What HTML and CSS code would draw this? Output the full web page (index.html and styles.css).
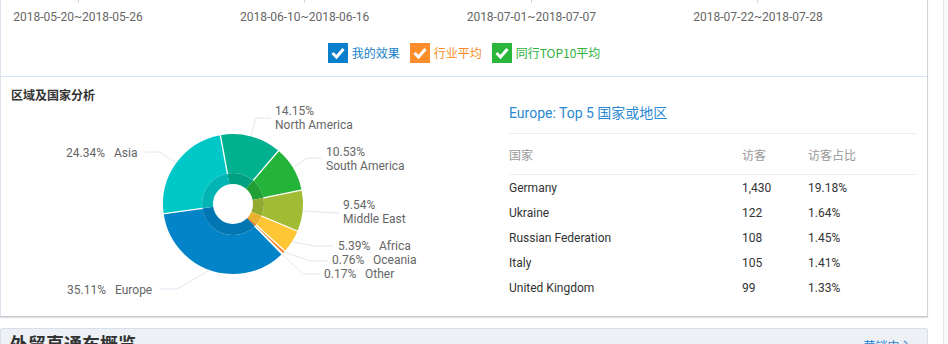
FILE: index.html
```html
<!DOCTYPE html>
<html lang="zh-CN">
<head>
<meta charset="utf-8">
<title>区域及国家分析</title>
<link rel="stylesheet" href="styles.css">
</head>
<body>
<div class="page">
  <div class="main">
    <section class="card">
      <div class="trend">
        <div class="axis">
          <div class="tick">2018-05-20~2018-05-26</div>
          <div class="tick">2018-06-10~2018-06-16</div>
          <div class="tick">2018-07-01~2018-07-07</div>
          <div class="tick">2018-07-22~2018-07-28</div>
        </div>
        <div class="legend">
          <span class="lg lg-blue"><span class="box"><svg viewBox="0 0 20 20" width="20" height="20"><polyline points="4.5,10 8.5,14 15.5,6" /></svg></span>我的效果</span>
          <span class="lg lg-orange"><span class="box"><svg viewBox="0 0 20 20" width="20" height="20"><polyline points="4.5,10 8.5,14 15.5,6" /></svg></span>行业平均</span>
          <span class="lg lg-green"><span class="box"><svg viewBox="0 0 20 20" width="20" height="20"><polyline points="4.5,10 8.5,14 15.5,6" /></svg></span>同行TOP10平均</span>
        </div>
      </div>
      <div class="region">
        <div class="pie-pane">
          <h3 class="sec-title">区域及国家分析</h3>
          <svg class="pie" viewBox="1 104 489 212" width="489" height="212">
            <g class="slices" fill="none" stroke-width="39">
              <circle cx="233" cy="204" r="50.5" pathLength="360" stroke="#00b08e" stroke-dasharray="50.94 360" transform="rotate(-100.4 233 204)"/>
              <circle cx="233" cy="204" r="50.5" pathLength="360" stroke="#24b43a" stroke-dasharray="37.91 360" transform="rotate(-49.46 233 204)"/>
              <circle cx="233" cy="204" r="50.5" pathLength="360" stroke="#a1bc34" stroke-dasharray="34.34 360" transform="rotate(-11.55 233 204)"/>
              <circle cx="233" cy="204" r="50.5" pathLength="360" stroke="#fec535" stroke-dasharray="19.40 360" transform="rotate(22.79 233 204)"/>
              <circle cx="233" cy="204" r="50.5" pathLength="360" stroke="#f47c1e" stroke-dasharray="2.74 360" transform="rotate(42.19 233 204)"/>
              <circle cx="233" cy="204" r="50.5" pathLength="360" stroke="#e3542a" stroke-dasharray="0.61 360" transform="rotate(44.93 233 204)"/>
              <circle cx="233" cy="204" r="50.5" pathLength="360" stroke="#0384c8" stroke-dasharray="126.40 360" transform="rotate(45.54 233 204)"/>
              <circle cx="233" cy="204" r="50.5" pathLength="360" stroke="#00c8c6" stroke-dasharray="87.62 360" transform="rotate(171.94 233 204)"/>
            </g>
            <g class="inner" fill="none" stroke-width="11">
              <circle cx="233" cy="204" r="25.5" pathLength="360" stroke="#00a083" stroke-dasharray="50.94 360" transform="rotate(-100.4 233 204)"/>
              <circle cx="233" cy="204" r="25.5" pathLength="360" stroke="#20a034" stroke-dasharray="37.91 360" transform="rotate(-49.46 233 204)"/>
              <circle cx="233" cy="204" r="25.5" pathLength="360" stroke="#91aa2f" stroke-dasharray="34.34 360" transform="rotate(-11.55 233 204)"/>
              <circle cx="233" cy="204" r="25.5" pathLength="360" stroke="#e8b130" stroke-dasharray="19.40 360" transform="rotate(22.79 233 204)"/>
              <circle cx="233" cy="204" r="25.5" pathLength="360" stroke="#dc701b" stroke-dasharray="3.4 360" transform="rotate(42.19 233 204)"/>
              <circle cx="233" cy="204" r="25.5" pathLength="360" stroke="#0275b3" stroke-dasharray="126.40 360" transform="rotate(45.54 233 204)"/>
              <circle cx="233" cy="204" r="25.5" pathLength="360" stroke="#00b5b3" stroke-dasharray="87.62 360" transform="rotate(171.94 233 204)"/>
            </g>
            <g class="seps">
              <line x1="233" y1="173" x2="233" y2="133" transform="rotate(-10.4 233 204)"/>
              <line x1="233" y1="173" x2="233" y2="133" transform="rotate(40.54 233 204)"/>
              <line x1="233" y1="173" x2="233" y2="133" transform="rotate(78.45 233 204)"/>
              <line x1="233" y1="173" x2="233" y2="133" transform="rotate(112.79 233 204)"/>
              <line x1="233" y1="173" x2="233" y2="133" transform="rotate(132.19 233 204)"/>
              <line x1="233" y1="173" x2="233" y2="133" transform="rotate(134.93 233 204)"/>
              <line x1="233" y1="173" x2="233" y2="133" transform="rotate(135.6 233 204)"/>
              <line x1="233" y1="173" x2="233" y2="133" transform="rotate(261.94 233 204)"/>
            </g>
            <g class="leaders">
              <polyline points="251,136 256,118 271,118"/>
              <polyline points="293,168 307,158 322,158"/>
              <polyline points="303,211 320,212 339,213"/>
              <polyline points="293,242 315,246 333,246"/>
              <polyline points="284,252 310,261 328,261"/>
              <polyline points="282,254 303,274 320,274"/>
              <polyline points="176,163 160,152 145,152"/>
              <polyline points="210,270 177,289 160,289"/>
            </g>
            <g class="labels">
              <text x="275" y="115">14.15%</text>
              <text x="275" y="129">North America</text>
              <text x="326" y="156">10.53%</text>
              <text x="326" y="170">South America</text>
              <text x="343" y="209">9.54%</text>
              <text x="343" y="223">Middle East</text>
              <text x="338" y="249.5">5.39%</text>
              <text x="379" y="249.5">Africa</text>
              <text x="332" y="264">0.76%</text>
              <text x="373" y="264">Oceania</text>
              <text x="324" y="277.5">0.17%</text>
              <text x="365" y="277.5">Other</text>
              <text x="66" y="156.5">24.34%</text>
              <text x="114" y="156.5">Asia</text>
              <text x="67" y="293.5">35.11%</text>
              <text x="115" y="293.5">Europe</text>
            </g>
          </svg>
        </div>
        <div class="table-pane">
          <div class="tbl-title">Europe: Top 5 国家或地区</div>
          <table class="tbl">
            <thead>
              <tr><th class="c1">国家</th><th class="c2">访客</th><th class="c3">访客占比</th></tr>
            </thead>
            <tbody>
              <tr><td>Germany</td><td>1,430</td><td>19.18%</td></tr>
              <tr><td>Ukraine</td><td>122</td><td>1.64%</td></tr>
              <tr><td>Russian Federation</td><td>108</td><td>1.45%</td></tr>
              <tr><td>Italy</td><td>105</td><td>1.41%</td></tr>
              <tr><td>United Kingdom</td><td>99</td><td>1.33%</td></tr>
            </tbody>
          </table>
        </div>
      </div>
    </section>
    <section class="card2">
      <h2 class="card2-title">外贸直通车概览</h2>
      <a class="card2-link" href="#">营销中心 »</a>
    </section>
  </div>
  <div class="gutter"></div>
</div>
</body>
</html>
```
FILE: styles.css
```css
html, body {
  margin: 0;
  padding: 0;
  background: #ffffff;
}
body {
  width: 948px;
  height: 344px;
  overflow: hidden;
  font-family: Roboto, "Noto Sans CJK SC", sans-serif;
  font-size: 12px;
  color: #333;
}
.page {
  display: flex;
  height: 344px;
}
.main {
  width: 928px;
  flex: none;
}
.gutter {
  flex: 1;
  display: flex;
}
.gutter::after {
  content: "";
  margin-left: 15px;
  border-left: 1px solid #dfe6ee;
  background: #f8f9fb;
  flex: 1;
}

/* card */
.card {
  height: 316px;
  border-left: 1px solid #dbe3ec;
  border-right: 1px solid #cfd4da;
  border-bottom: 1px solid #c6cbd1;
  box-shadow: 0 1px 1px rgba(0, 0, 0, 0.12);
  background: #fff;
  box-sizing: border-box;
  height: 317px;
}
.trend {
  height: 76px;
  box-sizing: border-box;
  border-bottom: 1px solid #d8e5f2;
  height: 77px;
}
.axis {
  display: grid;
  grid-template-columns: repeat(4, 154px);
  column-gap: 72.67px;
}
.tick {
  display: flex;
  flex-direction: column;
  align-items: center;
  color: #666;
  font-family: Roboto, sans-serif;
  font-size: 12px;
  line-height: 16px;
  white-space: nowrap;
}
.tick::before {
  content: "";
  width: 1px;
  height: 3px;
  background: #cfd6de;
  margin-bottom: 6px;
}
.legend {
  margin-top: 18px;
  display: flex;
  justify-content: center;
  gap: 10px;
}
.lg {
  display: inline-flex;
  align-items: center;
  gap: 4px;
  height: 20px;
  font-family: "Noto Sans CJK SC", Roboto, sans-serif;
  font-size: 12px;
  line-height: 20px;
}
.lg .box {
  width: 20px;
  height: 20px;
  display: block;
}
.lg .box svg {
  display: block;
}
.lg .box polyline {
  fill: none;
  stroke: #fff;
  stroke-width: 3;
  stroke-linejoin: miter;
}
.lg-blue { color: #1580c8; }
.lg-blue .box { background: #0a7fcb; }
.lg-orange { color: #f68b28; }
.lg-orange .box { background: #fb8d2b; }
.lg-green { color: #2db23b; }
.lg-green .box { background: #2ab63a; }

/* region */
.region {
  display: flex;
  height: 239px;
}
.pie-pane {
  width: 489px;
  flex: none;
}
.sec-title {
  margin: 0;
  padding: 9px 0 0 10px;
  font-family: "Noto Sans CJK SC", sans-serif;
  font-size: 12px;
  line-height: 18px;
  font-weight: bold;
  color: #333;
}
.pie {
  display: block;
}
.seps line {
  stroke: #fff;
  stroke-width: 1.3;
}
.leaders polyline {
  fill: none;
  stroke: #dfe8f1;
  stroke-width: 1;
}
.labels text {
  font-family: Roboto, sans-serif;
  font-size: 12px;
  fill: #666;
}

.table-pane {
  flex: 1;
  padding: 26px 11px 0 19px;
}
.tbl-title {
  font-family: Roboto, "Noto Sans CJK SC", sans-serif;
  font-size: 14px;
  line-height: 20px;
  color: #2a88d0;
  padding-bottom: 10px;
  border-bottom: 1px solid #e8edf3;
}
.tbl {
  width: 407px;
  border-collapse: collapse;
  table-layout: fixed;
}
.tbl th {
  height: 40px;
  padding: 0;
  text-align: left;
  font-weight: normal;
  font-family: "Noto Sans CJK SC", sans-serif;
  font-size: 12px;
  color: #999;
  border-bottom: 1px solid #e8edf3;
}
.tbl .c1 { width: 233px; }
.tbl .c2 { width: 66px; }
.tbl td {
  height: 25px;
  padding: 0;
  font-size: 12px;
  color: #333;
  line-height: 16px;
}

/* second card */
.card2 {
  margin-top: 11px;
  height: 40px;
  border: 1px solid #d6e0eb;
  border-radius: 2px;
  background: #edf1f6;
  display: flex;
  justify-content: space-between;
  align-items: flex-start;
  padding: 2px 7px 0 9px;
  box-sizing: border-box;
}
.card2-title {
  margin: 0;
  font-family: "Noto Sans CJK SC", sans-serif;
  font-size: 18px;
  line-height: 24px;
  font-weight: bold;
  color: #333;
}
.card2-link {
  margin-top: 7px;
  font-family: "Noto Sans CJK SC", sans-serif;
  font-size: 12px;
  line-height: 16px;
  color: #1a7fd0;
  text-decoration: none;
}
```
